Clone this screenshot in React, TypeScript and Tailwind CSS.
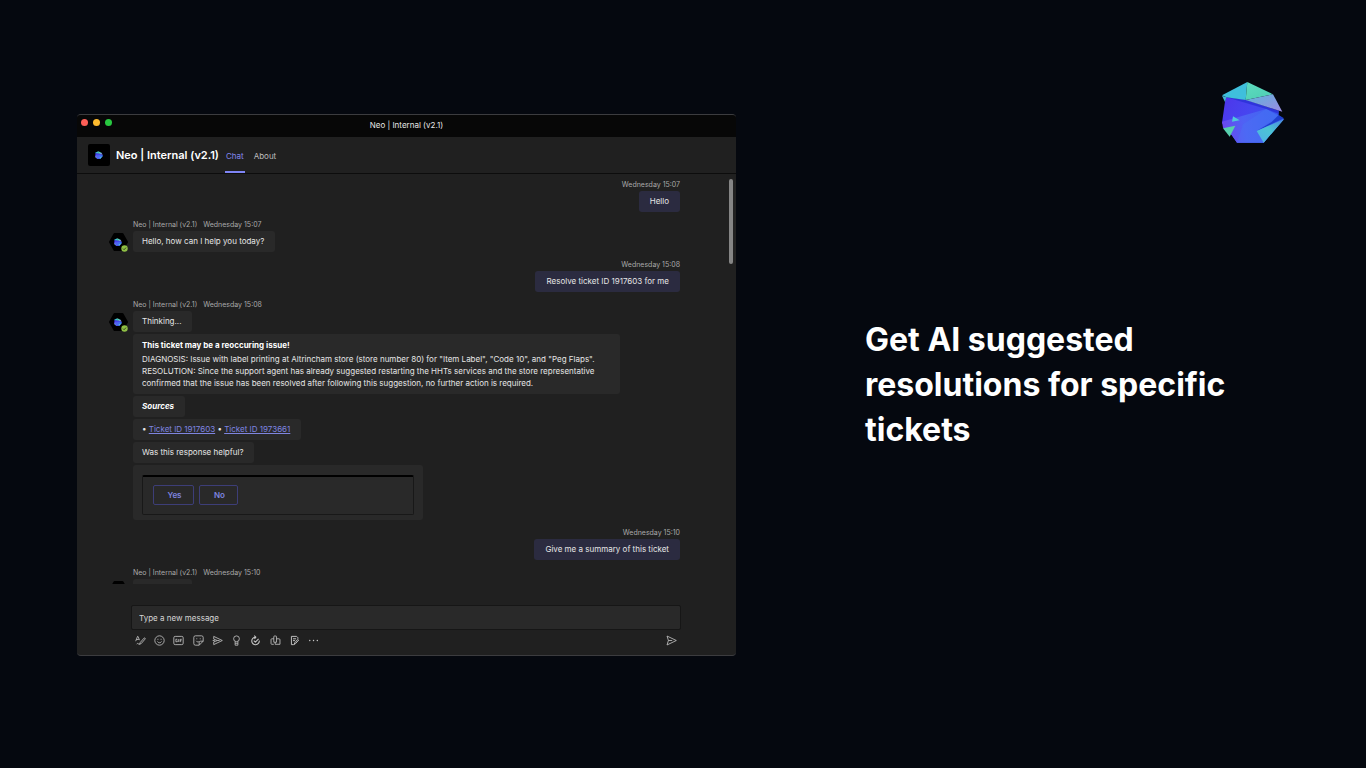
import type { ReactNode } from "react"

function Logo({ className }: { className: string }) {
  return (
    <svg className={className} viewBox="14 13 192 186" aria-hidden="true">
      <defs>
        <linearGradient id="core" x1="0" y1="0" x2="1" y2="0.4">
          <stop offset="0" stopColor="#4e35ea" />
          <stop offset="0.5" stopColor="#4646f0" />
          <stop offset="1" stopColor="#3458ee" />
        </linearGradient>
        <linearGradient id="lower" x1="0" y1="0.4" x2="1" y2="0.3">
          <stop offset="0" stopColor="#6a48ee" />
          <stop offset="0.35" stopColor="#4f62f4" />
          <stop offset="1" stopColor="#3a66f0" />
        </linearGradient>
        <linearGradient id="lilac" x1="0" y1="0" x2="1" y2="1">
          <stop offset="0" stopColor="#5fb4d8" />
          <stop offset="1" stopColor="#9a8ae4" />
        </linearGradient>
        <linearGradient id="mint" x1="0" y1="0" x2="0.6" y2="1">
          <stop offset="0" stopColor="#5fdcc0" />
          <stop offset="1" stopColor="#4fcfb4" />
        </linearGradient>
        <linearGradient id="fin" x1="0" y1="1" x2="1" y2="0">
          <stop offset="0" stopColor="#4fb0e8" />
          <stop offset="0.5" stopColor="#4cc4d4" />
          <stop offset="1" stopColor="#4a86e0" />
        </linearGradient>
      </defs>
      <path fill="url(#core)" d="M28 58 88 66 187 100V114L202 124 142 195H62L46 172 17 136Z" />
      <path fill="url(#lower)" d="M17 132 150 94 188 114 202 124 142 195H62L46 172 20 150Z" />
      <path fill="#4a7cf6" opacity="0.3" d="M150 94 188 114 121 160 142 195H62L80 140Z" />
      <path fill="#2b2fd6" opacity="0.8" d="M28 58 88 66 187 98 187 108 150 94Z" />
      <path fill="#1f3fd0" d="M187 112 203 122 121 160 166 133Z" />
      <path fill="#3fbfdc" d="M17 53 93 13 88 67 30 59Z" />
      <path fill="url(#mint)" d="M93 13 170 50 88 67Z" />
      <path fill="url(#lilac)" d="M170 50 198 102 88 67Z" />
      <path fill="#43b4d8" d="M17 54 30 59 26 73Z" />
      <path fill="url(#fin)" d="M204 124 142 195 121 160Z" />
      <path fill="#4fc8dc" d="M50 116 70 128 47 132Z" />
      <path fill="#58d0ae" d="M20 152 57 144 40 177Z" />
    </svg>
  )
}

function Avatar() {
  return (
    <div className="relative mt-0.5 h-[18px] w-[19px] shrink-0">
      <svg className="size-full" viewBox="0 0 19 18" aria-hidden="true">
        <path d="M5.500 1h8L18 9l-4.500 8h-8L1 9Z" fill="#000" stroke="#000" strokeWidth="2" strokeLinejoin="round" />
      </svg>
      <Logo className="absolute top-[5px] left-[5px] size-2" />
      <svg className="absolute right-0 -bottom-px size-[7px]" viewBox="0 0 7 7" aria-hidden="true">
        <circle cx="3.500" cy="3.500" r="3.200" fill="#8fbf45" />
        <path d="M2 3.600 3.100 4.700 5 2.600" fill="none" stroke="#28330f" strokeWidth="0.800" />
      </svg>
    </div>
  )
}

function Bubble({ children }: { children: ReactNode }) {
  return <div className="rounded-[3px] bg-[#292929] py-1 pr-[11px] pl-[9px] leading-[13px]">{children}</div>
}

function Sent({ time, text }: { time: string; text: string }) {
  return (
    <li className="flex flex-col items-end">
      <time className="text-[7px] leading-3 text-[#a9a9a9]">{time}</time>
      <p className="rounded-[3px] bg-[#2b2b40] px-[11px] py-1 leading-[13px]">{text}</p>
    </li>
  )
}

function Received({ time, children }: { time: string; children: ReactNode }) {
  return (
    <li>
      <div className="flex gap-1.5 pl-6 text-[7px] leading-3 text-[#a9a9a9]">
        <span>Neo | Internal (v2.1)</span>
        <time>{time}</time>
      </div>
      <div className="flex items-start gap-[5px]">
        <Avatar />
        <div className="flex min-w-0 flex-col items-start gap-0.5">{children}</div>
      </div>
    </li>
  )
}

const tools = [
  {
    label: "Format",
    icon: <path d="M1 9 3.700 2h.6L6.500 7.500M2 6.500h3.500M13.200 4.500c1.200-.8 2.300.5 1.400 1.500L9 12.500 6.500 13.500 7.500 11ZM2.500 13c1-2 2.500.5 4 .5" />,
  },
  {
    label: "Emoji",
    icon: (
      <>
        <circle cx="8" cy="8" r="6.800" />
        <path d="M5 9.500c1.500 2.300 4.500 2.300 6 0M5.700 5.500v1.500M10.300 5.500v1.500" />
      </>
    ),
  },
  {
    label: "GIF",
    icon: (
      <>
        <rect x="1.200" y="2" width="13.600" height="12" rx="2" />
        <path d="M6.300 6.200H4.200v3.600h2.100V8.200M8.300 6v4.200M10.500 10.300V6.300h2.200M10.500 8.300h1.800" />
      </>
    ),
  },
  {
    label: "Sticker",
    icon: <path d="M3.500 1.200h9a2.300 2.300 0 0 1 2.300 2.300V9L9 14.800H3.500a2.300 2.300 0 0 1-2.300-2.300v-9a2.300 2.300 0 0 1 2.300-2.300ZM14.800 9H11a2 2 0 0 0-2 2v3.800M4.500 8.500c1 1.500 3 2 4.500 1M5.500 4.800v1.400M10.500 4.800v1.400" />,
  },
  {
    label: "Stream",
    icon: <path d="M2.500 2 15 8 2.500 14V10L8 8 2.500 6ZM8 8h3M1 8h3" />,
  },
  {
    label: "Praise",
    icon: (
      <>
        <circle cx="8" cy="5.500" r="4.200" />
        <path d="M6 9.500v5.300h4V9.500M6 12h4" />
      </>
    ),
  },
  {
    label: "Loop",
    icon: <path strokeWidth="1.600" d="M8 3.200a5.500 5.500 0 1 0 5.500 5M6 1 8.500 3.200 6.500 5.500M5.500 8.300 7.800 10.300 12.500 5.500" />,
  },
  {
    label: "Viva",
    icon: <path d="M5.500 5.500H2.500a1 1 0 0 0-1 1v6a1 1 0 0 0 1 1h3M5.500 10.500v-8a1 1 0 0 1 1-1H8.500a1 1 0 0 1 1 1V10.500ZM9.500 5.500H13a1.500 1.500 0 0 1 1.500 1.500v6.500h-7V10.500" />,
  },
  {
    label: "Approvals",
    icon: (
      <>
        <path strokeWidth="1.400" d="M7 14H3.500V2h7.500l2 2v1.500" />
        <path strokeWidth="1.400" d="M5.800 5.500h4.500M5.800 8.200h3M14 7.500 9.500 12.500 7.800 13.800l.4-2.300L12.500 6.500Z" />
      </>
    ),
  },
  {
    label: "More options",
    icon: <path strokeWidth="2" strokeLinecap="round" d="M2.500 8h.1M8 8h.1M13.500 8h.1" />,
  },
]

function ToolIcon({ children }: { children: ReactNode }) {
  return (
    <svg className="size-[11px]" viewBox="0 0 16 16" fill="none" stroke="currentColor" strokeWidth="1.200" strokeLinejoin="round" aria-hidden="true">
      {children}
    </svg>
  )
}

function ChatWindow() {
  return (
    <section className="mt-0.5 min-w-0 flex-1 self-center overflow-hidden rounded-[4px] border-y border-[#3c3c3f] bg-[#202020] text-[8px] text-[#e6e6e6]">
      {/* Title bar */}
      <div className="grid h-[22px] grid-cols-[1fr_auto_1fr] bg-[#070707]">
        <div className="flex gap-[5px] pt-1 pl-1">
          <button aria-label="Close" className="size-[7px] rounded-full bg-[#fe5f57]" />
          <button aria-label="Minimize" className="size-[7px] rounded-full bg-[#febb2e]" />
          <button aria-label="Zoom" className="size-[7px] rounded-full bg-[#28c840]" />
        </div>
        <div className="leading-5">Neo | Internal (v2.1)</div>
      </div>

      {/* Chat header */}
      <header className="flex h-[37px] items-center border-b border-[#0c0c0c] pl-[11px]">
        <div className="flex size-[22px] items-center justify-center rounded-[2px] bg-black">
          <Logo className="size-2" />
        </div>
        <h2 className="ml-1.5 text-[11px] font-semibold text-white">Neo | Internal (v2.1)</h2>
        <div role="tablist" className="ml-1.5 flex gap-2 self-stretch">
          <button role="tab" aria-selected="true" className="border-b-2 border-[#7f85f5] px-px pt-1 text-[#8388ee]">
            Chat
          </button>
          <button role="tab" aria-selected="false" className="border-b-2 border-transparent px-px pt-1 text-[#bdbdbd]">
            About
          </button>
        </div>
      </header>

      {/* Messages */}
      <div className="flex h-[410px] items-start overflow-hidden pt-[5px]">
        <ol className="flex min-w-0 flex-1 flex-col gap-[7px] pr-[49px] pl-8">
          <Sent time="Wednesday 15:07" text="Hello" />
          <Received time="Wednesday 15:07">
            <Bubble>Hello, how can I help you today?</Bubble>
          </Received>
          <Sent time="Wednesday 15:08" text="Resolve ticket ID 1917603 for me" />
          <Received time="Wednesday 15:08">
            <Bubble>Thinking...</Bubble>
            <div className="w-[487px] max-w-full rounded-[3px] bg-[#292929] px-[9px] py-[5px] leading-3">
              <h3 className="mb-0.5 font-bold text-white">This ticket may be a reoccuring issue!</h3>
              <p>DIAGNOSIS: Issue with label printing at Altrincham store (store number 80) for "Item Label", "Code 10", and "Peg Flaps".</p>
              <p>
                RESOLUTION: Since the support agent has already suggested restarting the HHTs services and the store representative
                confirmed that the issue has been resolved after following this suggestion, no further action is required.
              </p>
            </div>
            <Bubble>
              <strong className="font-bold text-white italic">Sources</strong>
            </Bubble>
            <Bubble>
              • <a href="#1917603" className="text-[#7f85e0] underline">Ticket ID 1917603</a> •{" "}
              <a href="#1973661" className="text-[#7f85e0] underline">Ticket ID 1973661</a>
            </Bubble>
            <Bubble>Was this response helpful?</Bubble>
            <div className="w-[290px] rounded-[3px] bg-[#292929] px-[9px] pt-2.5 pb-[5px]">
              <div className="flex h-10 gap-[5px] rounded-[2px] border border-t-2 border-[#181818] border-t-black px-2.5 pt-2">
                <button className="h-5 w-[41px] rounded-[2px] border border-[#3d3e78] pl-0.5 font-semibold text-[#7f85e0]">Yes</button>
                <button className="h-5 w-[39px] rounded-[2px] border border-[#3d3e78] pl-0.5 font-semibold text-[#7f85e0]">No</button>
              </div>
            </div>
          </Received>
          <Sent time="Wednesday 15:10" text="Give me a summary of this ticket" />
          <Received time="Wednesday 15:10">
            {/* reply still loading */}
            <div className="h-[21px] w-[59px] rounded-[3px] bg-[#292929]" />
          </Received>
        </ol>
        <div className="mr-[3px] h-[85px] w-1 rounded-full bg-[#858585]" />
      </div>

      {/* Composer */}
      <form className="pt-[21px] pr-[55px] pb-[9px] pl-[54px]">
        <input
          aria-label="Type a new message"
          placeholder="Type a new message"
          className="block h-[25px] w-full rounded-[2px] border border-[#161616] bg-[#292929] px-[7px] placeholder:text-[#d6d6d6]"
        />
        <div className="flex justify-between px-1 pt-[5px] text-[#c4c4c4]">
          <div className="flex w-[184px] justify-between">
            {tools.map((tool) => (
              <button key={tool.label} type="button" aria-label={tool.label}>
                <ToolIcon>{tool.icon}</ToolIcon>
              </button>
            ))}
          </div>
          <button type="button" aria-label="Send">
            <ToolIcon>
              <path d="M1.500 1.500 15 8 1.500 14.500 3.500 8ZM3.500 8H9" />
            </ToolIcon>
          </button>
        </div>
      </form>
    </section>
  )
}

export default function App() {
  return (
    <main className="flex min-h-screen gap-[129px] bg-[#05080f] pr-20 pl-[77px] font-['Inter',sans-serif]">
      <ChatWindow />
      <div className="grid w-[421px] shrink-0 grid-rows-[1fr_auto_1fr]">
        <div className="flex justify-end pt-[82px] pr-px">
          <Logo className="h-[62px] w-16" />
        </div>
        <h1 className="text-[32px] leading-[45px] font-bold text-white">Get AI suggested resolutions for specific tickets</h1>
      </div>
    </main>
  )
}
